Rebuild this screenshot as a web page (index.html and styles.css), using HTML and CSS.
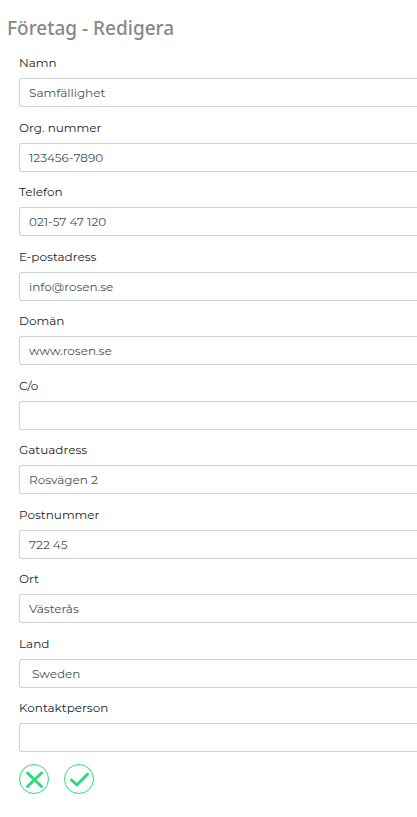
FILE: index.html
```html
<!DOCTYPE html>
<html lang="sv">
<head>
  <meta charset="UTF-8"/>
  <meta name="viewport" content="width=device-width,initial-scale=1.0"/>
  <title>Företag - Redigera</title>
  <link rel="stylesheet" href="styles.css">
</head>
<body>
<h1>Företag - Redigera</h1>
<form class="company-form">
  <div class="field">
    <label for="name">Namn</label>
    <input type="text" id="name" value="Samfällighet">
  </div>
  <div class="field">
    <label for="orgnr">Org. nummer</label>
    <input type="text" id="orgnr" value="123456-7890">
  </div>
  <div class="field">
    <label for="phone">Telefon</label>
    <input type="tel" id="phone" value="021-57 47 120">
  </div>
  <div class="field">
    <label for="email">E-postadress</label>
    <input type="email" id="email" value="info@rosen.se">
  </div>
  <div class="field">
    <label for="domain">Domän</label>
    <input type="text" id="domain" value="www.rosen.se">
  </div>
  <div class="field">
    <label for="co">C/o</label>
    <input type="text" id="co">
  </div>
  <div class="field">
    <label for="street">Gatuadress</label>
    <input type="text" id="street" value="Rosvägen 2">
  </div>
  <div class="field">
    <label for="zip">Postnummer</label>
    <input type="text" id="zip" value="722 45">
  </div>
  <div class="field">
    <label for="city">Ort</label>
    <input type="text" id="city" value="Västerås">
  </div>
  <div class="field">
    <label for="country">Land</label>
    <select id="country">
      <option selected>Sweden</option>
    </select>
  </div>
  <div class="field">
    <label for="contact">Kontaktperson</label>
    <input type="text" id="contact">
  </div>
  <div class="actions">
    <button type="reset" aria-label="Avbryt">
      <svg viewBox="0 0 30 30"><circle cx="15" cy="15" r="14.5"/><path d="M8.500 9l14 13.500M22.500 9l-14 13.500"/></svg>
    </button>
    <button type="submit" aria-label="Spara">
      <svg viewBox="0 0 30 30"><circle cx="15" cy="15" r="14.5"/><path d="M7.500 16l5.500 5L23.500 10"/></svg>
    </button>
  </div>
</form>
</body>
</html>
```

FILE: styles.css
```css
* { box-sizing:border-box; }
body { margin:0; padding:16px 0 16px 7px; background:#fff; color:#212529; font-family:Montserrat, Inter, sans-serif; font-size:12px; }
h1 { margin:0 0 12px; color:#888; font-family:"Trebuchet MS", "Noto Sans", sans-serif; font-size:19px; font-weight:500; line-height:24px; }
.company-form { padding-left:12px; }
.field { display:flex; flex-direction:column; gap:5px; margin-bottom:10px; }
.field:nth-child(even) { margin-bottom:9px; }
.field label { padding-top:1px; line-height:20px; }
/* fields run out to the right edge of the panel */
.field input, .field select { width:100%; height:29px; margin:0; padding:0 9px; border:1px solid #ced4da; border-right:0; border-radius:3px 0 0 3px; background:#fff; color:#495057; font:inherit; appearance:none; }
.field select { padding-left:12px; }
.actions { display:flex; gap:15px; padding-top:2px; }
.actions button { width:30px; height:30px; padding:0; border:none; background:none; cursor:pointer; }
.actions svg { display:block; width:30px; height:30px; fill:none; stroke:#2bdc7c; }
.actions path { stroke-width:3; stroke-linecap:round; stroke-linejoin:round; }
```
